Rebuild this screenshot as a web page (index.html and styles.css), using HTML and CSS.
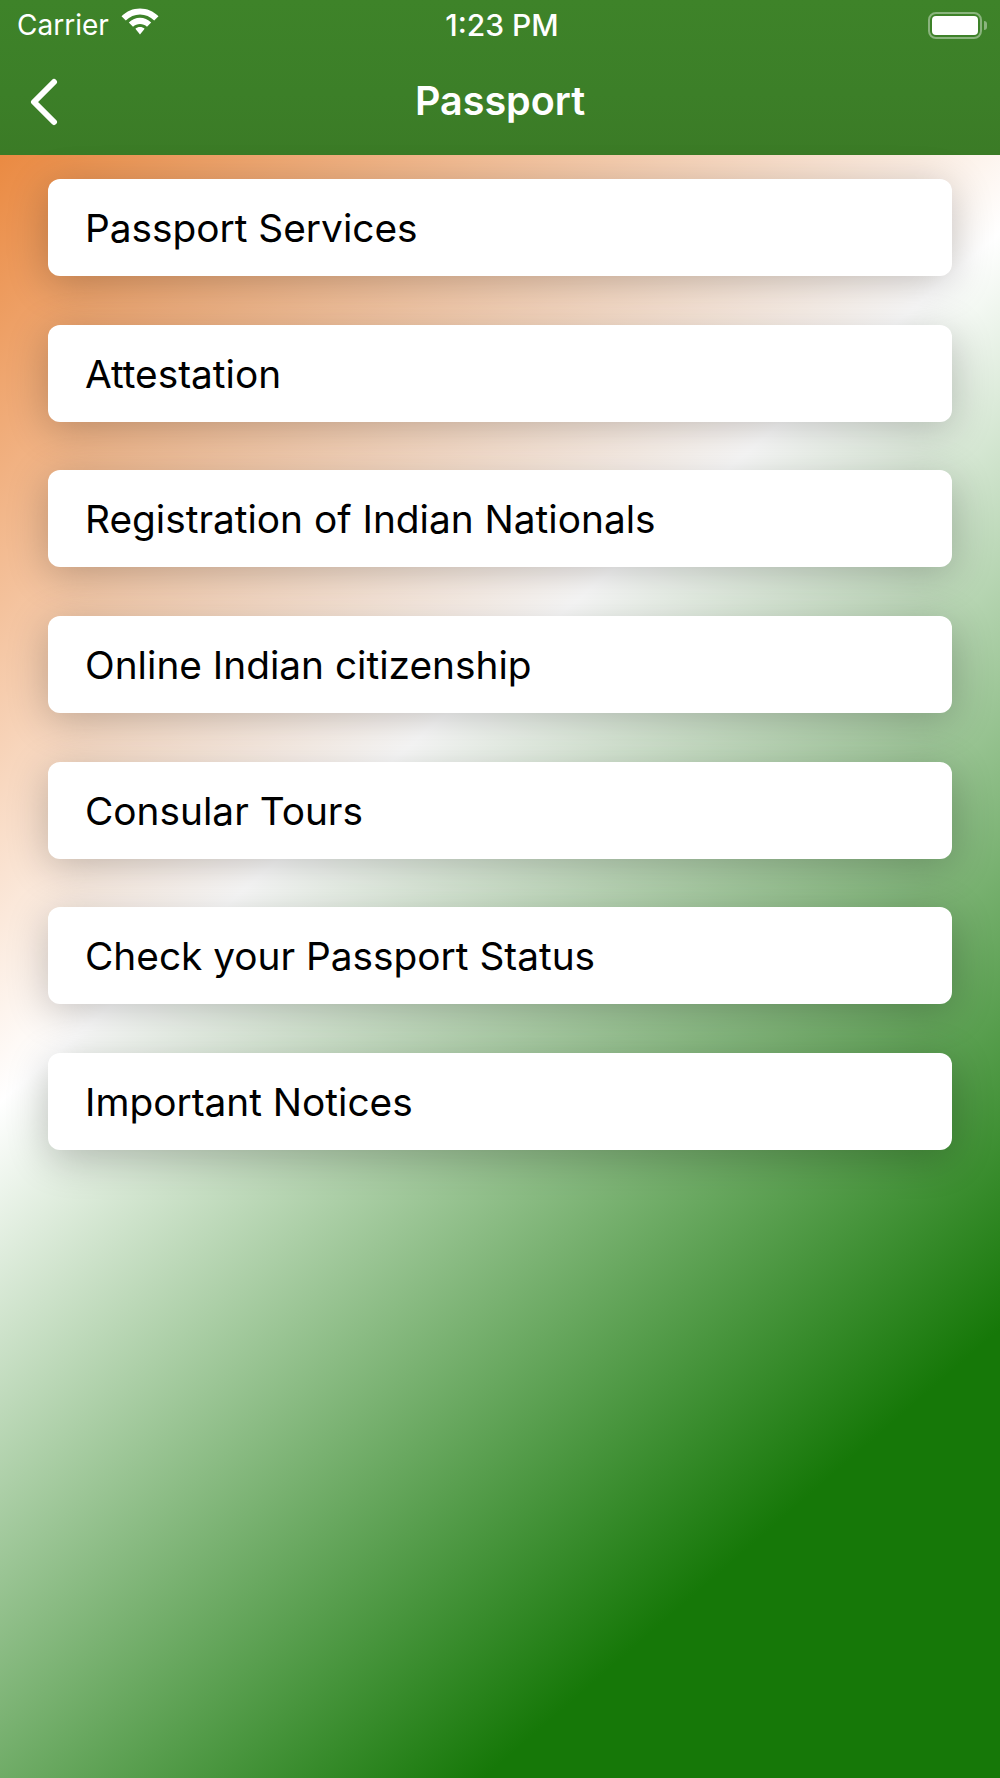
FILE: index.html
```html
<!DOCTYPE html>
<html lang="en">
<head>
<meta charset="utf-8">
<title>Passport</title>
<link rel="stylesheet" href="styles.css">
</head>
<body>
<div class="app">
  <header class="header">
    <div class="status">
      <div class="status-left">
        <span class="carrier">Carrier</span>
        <svg class="wifi" width="38" height="28" viewBox="0 0 38 28" aria-hidden="true">
          <path d="M19 .5C12 .5 5.700 3.200.5 8.200L4.800 12.600C8.800 8.800 13.700 6.600 19 6.600S29.200 8.800 33.200 12.600L37.500 8.200C32.300 3.200 26 .5 19 .5Z" fill="#fff"/>
          <path d="M19 9.800C15 9.800 11 11.400 7.800 14.500L12 18.800C14 17 16.400 16 19 16S24 17 26 18.800L30.200 14.500C27 11.400 23 9.800 19 9.800Z" fill="#fff"/>
          <path d="M19 19C17.200 19 15.600 19.600 14.400 20.800L19 26.500L23.600 20.800C22.400 19.600 20.800 19 19 19Z" fill="#fff"/>
        </svg>
      </div>
      <span class="time">1:23 PM</span>
      <div class="status-right">
        <div class="battery"><div class="battery-fill"></div></div>
        <div class="battery-tip"></div>
      </div>
    </div>
    <nav class="nav">
      <svg class="back" width="32" height="48" viewBox="0 0 32 48" aria-hidden="true">
        <path d="M26 4L6 24L26 44" fill="none" stroke="#fff" stroke-width="6" stroke-linecap="round" stroke-linejoin="round"/>
      </svg>
      <h1 class="title">Passport</h1>
    </nav>
  </header>
  <main class="list">
    <div class="card">Passport Services</div>
    <div class="card">Attestation</div>
    <div class="card">Registration of Indian Nationals</div>
    <div class="card">Online Indian citizenship</div>
    <div class="card">Consular Tours</div>
    <div class="card">Check your Passport Status</div>
    <div class="card">Important Notices</div>
  </main>
</div>
</body>
</html>
```
FILE: styles.css
```css
html, body {
  margin: 0;
  padding: 0;
}
body {
  width: 1000px;
  height: 1778px;
  overflow: hidden;
  font-family: Inter, "Liberation Sans", sans-serif;
}
.app {
  display: flex;
  flex-direction: column;
  height: 1778px;
}
.header {
  height: 155px;
  flex: none;
  background: linear-gradient(180deg, #3e8329 0%, #3c7f28 60%, #3b7b26 100%);
  color: #fff;
}
.status {
  height: 50px;
  display: grid;
  grid-template-columns: 1fr auto 1fr;
  align-items: center;
  padding: 0 13px 0 17px;
}
.status-left {
  display: flex;
  align-items: center;
  gap: 12px;
}
.carrier {
  font-size: 28px;
}
.wifi {
  margin-top: -6px;
}
.time {
  font-size: 30px;
  font-weight: 500;
}
.status-right {
  display: flex;
  align-items: center;
  justify-content: flex-end;
  gap: 2px;
}
.battery {
  box-sizing: border-box;
  width: 54px;
  height: 27px;
  border: 2px solid rgba(255, 255, 255, .4);
  border-radius: 8px;
  padding: 2px;
}
.battery-fill {
  height: 100%;
  background: #fff;
  border-radius: 4px;
}
.battery-tip {
  width: 3px;
  height: 9px;
  background: rgba(255, 255, 255, .4);
  border-radius: 0 4px 4px 0;
}
.nav {
  position: relative;
  height: 105px;
  display: flex;
  align-items: center;
  justify-content: center;
}
.back {
  position: absolute;
  left: 28px;
  top: 28px;
}
.title {
  margin: -4px 0 0;
  font-size: 39.5px;
  font-weight: 600;
}
.list {
  flex: 1;
  display: flex;
  flex-direction: column;
  gap: 48.7px;
  padding: 24px 48px 0;
  background: linear-gradient(139deg, #ea8a42 0%, #ffffff 38%, #167808 82%);
}
.card {
  height: 97px;
  flex: none;
  display: flex;
  align-items: center;
  box-sizing: border-box;
  padding: 0 37px;
  background: #fff;
  border-radius: 12px;
  box-shadow: 0 8px 42px rgba(0, 0, 0, .24);
  color: #000;
  font-size: 38.8px;
}
```
